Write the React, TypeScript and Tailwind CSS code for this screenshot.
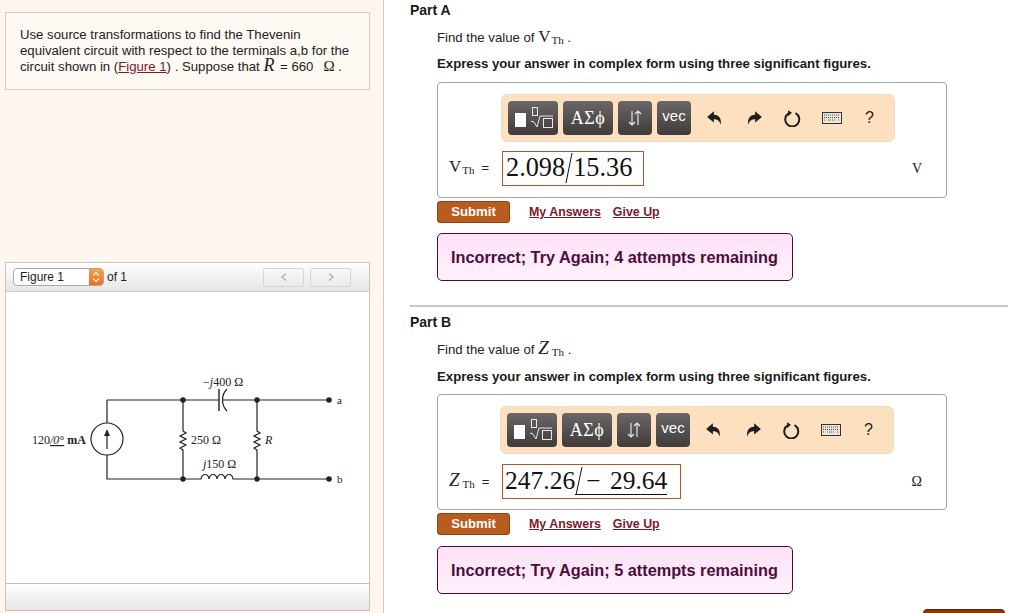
import React from "react";

const sans = "font-['Liberation_Sans',Arial,sans-serif]";
const serif = "font-['Liberation_Serif','Times_New_Roman',serif]";

function Circuit() {
  const s = "#222";
  return (
    <svg width="340" height="130" viewBox="0 0 340 130" className="block">
      <g fill="none" stroke={s} strokeWidth="1.2">
        <path d="M87 35H199M203 35H237H309" />
        <path d="M87 35V58M87 90V114H163" />
        <circle cx="87" cy="74" r="16" />
        <path d="M87 84V68" />
        <path d="M163 35V66L166 68L160 71L166 74L160 77L166 80L160 83L163 85V114" />
        <path d="M237 35V66L240 68L234 71L240 74L234 77L240 80L234 83L237 85V114" />
        <path d="M163 114H181C182 108 188 108 189 114C190 108 196 108 197 114C198 108 204 108 205 114C206 108 212 108 213 114H309" />
        <path d="M199 24V46" strokeWidth="1.4" />
        <path d="M207 24C201 30 201 40 207 46" />
      </g>
      <path d="M87 64L84 71H90Z" fill={s} />
      <g fill={s}>
        <circle cx="163" cy="35" r="2.7" /><circle cx="237" cy="35" r="2.7" />
        <circle cx="163" cy="114" r="2.7" /><circle cx="237" cy="114" r="2.7" />
        <circle cx="309" cy="35" r="2.8" /><circle cx="309" cy="114" r="2.8" />
      </g>
      <g fill="#222" fontFamily="'Liberation Serif',serif" fontSize="12">
        <text x="12" y="79">120<tspan fontStyle="italic" textDecoration="underline">/0°</tspan> <tspan fontWeight="bold">mA</tspan></text>
        <text x="171" y="79">250 Ω</text>
        <text x="245" y="79" fontStyle="italic">R</text>
        <text x="183" y="21">−<tspan fontStyle="italic">j</tspan>400 Ω</text>
        <text x="183" y="103"><tspan fontStyle="italic">j</tspan>150 Ω</text>
        <text x="317" y="39" fontSize="11">a</text>
        <text x="317" y="118" fontSize="11">b</text>
      </g>
    </svg>
  );
}

function ToolBtn({ w, children }: { w: string; children: React.ReactNode }) {
  return (
    <div className={`${w} h-[34px] rounded-[4px] bg-gradient-to-b from-[#6b6766] to-[#403c3b] flex items-center justify-center text-white shrink-0`}>
      {children}
    </div>
  );
}

function Toolbar({ ml }: { ml: string }) {
  return (
    <div className={`${ml} w-[394px] h-[48px] rounded-[6px] bg-[#fde0c0] border border-[#eddcc8] flex items-center pl-[6px]`}>
      <div className="flex gap-[5px]">
        <ToolBtn w="w-[50px]">
          <svg width="42" height="28" viewBox="0 0 42 28" fill="none">
            <rect x="3" y="9" width="11" height="14" fill="#fff" />
            <rect x="20.500" y="3.500" width="5" height="8" stroke="#e8e8e8" />
            <path d="M19 17l3 1 3 5 3-11h13" stroke="#e8e8e8" />
            <rect x="31.500" y="14.500" width="9" height="9" stroke="#e8e8e8" />
          </svg>
        </ToolBtn>
        <ToolBtn w="w-[50px]"><span className={`${serif} text-[18px] tracking-[0.5px]`}>ΑΣϕ</span></ToolBtn>
        <ToolBtn w="w-[34px]">
          <svg width="16" height="16" viewBox="0 0 16 16" fill="none" stroke="#eee" strokeWidth="1.1">
            <path d="M5 1V15M2 12l3 3 3-3" /><path d="M11 15V1M8 4l3-3 3 3" />
          </svg>
        </ToolBtn>
        <ToolBtn w="w-[34px]"><span className={`${sans} text-[15px] -mt-[4px]`}>vec</span></ToolBtn>
      </div>
      <div className="flex items-center ml-[15px] text-[#222]">
        <svg width="18" height="16" viewBox="0 0 16 14" className="mr-[21px]"><path d="M7 1L1 6l6 5V8c3 0 5 1 6 5 1-5-1-9-6-9z" fill="#1f1f1f" /></svg>
        <svg width="18" height="16" viewBox="0 0 16 14" className="mr-[20px]"><path d="M9 1l6 5-6 5V8c-3 0-5 1-6 5-1-5 1-9 6-9z" fill="#1f1f1f" /></svg>
        <svg width="18" height="18" viewBox="0 0 18 18" fill="none" className="mr-[21px]"><path d="M6 4.200a7 7 0 1 0 6.500 0" stroke="#1f1f1f" strokeWidth="2" /><path d="M5 1.200v6l4-3.500z" fill="#1f1f1f" /></svg>
        <svg width="20" height="12" viewBox="0 0 20 12" fill="none" className="mr-[23px]">
          <rect x="0.500" y="0.500" width="19" height="11" fill="#efe7da" stroke="#333" />
          <path d="M2 3h16M2 5.500h16M2 8h2M6 8h8M16 8h2" stroke="#444" strokeDasharray="1 1" />
        </svg>
        <span className={`${sans} text-[16px] leading-none`}>?</span>
      </div>
    </div>
  );
}

function Part(props: {
  title: string; sym: React.ReactNode; label: React.ReactNode; unit: string; attempts: string;
  inputW: string; answer: React.ReactNode; toolMl: string; findMt: string; msgMt: string; rowMt: string;
  exprMt: string; boxMt: string;
}) {
  return (
    <>
      <div className="text-[14px] leading-[16px] font-bold text-[#1a1a1a]">{props.title}</div>
      <div className="ml-[27px]">
        <div className={`${props.findMt} h-[18px] text-[13.200px] leading-[18px] text-[#222] flex items-baseline`}>
          Find the value of&nbsp;{props.sym}
          <span className={`${serif} text-[11px] translate-y-[2px] ml-[1px]`}>Th</span>&nbsp;.
        </div>
        <div className={`${props.exprMt} h-[16px] text-[13.200px] leading-[16px] font-bold text-[#1a1a1a] whitespace-nowrap`}>Express your answer in complex form using three significant figures.</div>
        <div className={`${props.boxMt} w-[510px] h-[116px] rounded-[4px] border border-[#a5a5a5] bg-white`}>
          <div className="pt-[11px]"><Toolbar ml={props.toolMl} /></div>
          <div className={`flex items-center ${props.rowMt} h-[36px] pl-[11px]`}>
            <div className="w-[53px] flex items-baseline text-[#222] shrink-0">
              {props.label}
              <span className={`${serif} text-[11px] translate-y-[2px] ml-[1px]`}>Th</span>
              <span className="text-[13px] ml-[7px]">=</span>
            </div>
            <div className={`${props.inputW} h-[35px] border border-[#b0562a] flex items-center pl-[2px] ${serif} text-[25.500px] text-[#111] shrink-0 whitespace-nowrap`}>
              {props.answer}
            </div>
            <div className={`${serif} flex-1 text-right pr-[24px] text-[14px] text-[#222]`}>{props.unit}</div>
          </div>
        </div>
        <div className="flex items-center mt-[3px] h-[22px]">
          <div className="w-[73px] h-[22px] rounded-[3px] bg-[#b85c20] border border-[#8a4314] flex items-center justify-center text-white text-[13.200px] font-bold">Submit</div>
          <span className="ml-[19px] text-[12.400px] font-bold underline text-[#7d1a2c]">My Answers</span>
          <span className="ml-[12px] text-[12.400px] font-bold underline text-[#7d1a2c]">Give Up</span>
        </div>
        <div className={`${props.msgMt} w-[356px] h-[48px] rounded-[5px] border border-[#4a0d3a] bg-gradient-to-b from-[#fde0f7] to-[#fff2fc] flex items-center pl-[13px] text-[16.300px] font-bold text-[#4e0d3c] whitespace-nowrap`}>
          Incorrect; Try Again; {props.attempts} attempts remaining
        </div>
      </div>
    </>
  );
}

export default function App() {
  return (
    <div className={`${sans} w-[1024px] h-[613px] overflow-hidden bg-white flex`}>
      <div className="w-[384px] h-[613px] shrink-0 bg-[#fdf6ee] border-r border-[#d3c8ba] pl-[5px] pt-[12px]">
        <div className="w-[365px] h-[78px] border border-[#d6ccbc] bg-[#fef9f3] pl-[14px] pt-[14px] text-[13.200px] leading-[16px] text-[#222] whitespace-nowrap">
          <div>Use source transformations to find the Thevenin</div>
          <div>equivalent circuit with respect to the terminals a,b for the</div>
          <div className="h-[16px] whitespace-pre">
            circuit shown in (<span className="underline text-[#7d1a2c]">Figure 1</span>) . Suppose that <span className={`${serif} italic text-[18px] leading-[12px] mr-[2px]`}>R</span> = 660 &nbsp;&thinsp;<span className={`${serif} text-[15px] leading-[12px]`}>Ω</span> .
          </div>
        </div>
        <div className="mt-[172px] w-[365px] h-[349px] border border-[#cdc2b3] flex flex-col bg-white">
          <div className="h-[29px] shrink-0 border-b border-[#d6ccbc] bg-gradient-to-b from-[#ffffff] to-[#e6e6e6] flex items-center pl-[7px]">
            <div className="w-[91px] h-[18px] rounded-[4px] border border-[#aaa] bg-white flex items-center pl-[6px] text-[12px] text-[#222] relative overflow-hidden">
              Figure 1
              <div className="absolute right-0 top-0 bottom-0 w-[14px] bg-gradient-to-b from-[#f9a040] to-[#f26a1e] flex items-center justify-center">
                <svg width="8" height="12" viewBox="0 0 8 12" fill="none" stroke="#fff" strokeWidth="1.1"><path d="M1 4.500L4 1.500L7 4.500M1 7.500L4 10.500L7 7.500" /></svg>
              </div>
            </div>
            <span className="ml-[3px] text-[12px] text-[#222]">of 1</span>
            <div className="ml-auto mr-[18px] flex gap-[6px]">
              <div className="w-[41px] h-[19px] rounded-[2px] border border-[#d5d5d5] flex items-center justify-center">
                <svg width="8" height="10" viewBox="0 0 8 10" fill="none" stroke="#b5b5b5" strokeWidth="1.600"><path d="M6 1.500L2 5l4 3.500" /></svg>
              </div>
              <div className="w-[41px] h-[19px] rounded-[2px] border border-[#d5d5d5] flex items-center justify-center">
                <svg width="8" height="10" viewBox="0 0 8 10" fill="none" stroke="#b5b5b5" strokeWidth="1.600"><path d="M2 1.500L6 5 2 8.500" /></svg>
              </div>
            </div>
          </div>
          <div className="flex-1 pt-[73px] pl-[14px]"><Circuit /></div>
          <div className="h-[27px] shrink-0 border-t border-[#c9bdae] bg-gradient-to-b from-[#ffffff] to-[#e6e6e6]" />
        </div>
      </div>
      <div className="flex-1 pl-[26px] pt-[2px] min-w-0">
        <Part title="Part A" findMt="mt-[10px]" exprMt="mt-[10px]" boxMt="mt-[10px]" msgMt="mt-[10px]" rowMt="mt-[8px]" unit="V" attempts="4" toolMl="ml-[63px]" inputW="w-[142px]"
          sym={<span className={`${serif} text-[17px] leading-none`}>V</span>}
          label={<span className={`${serif} text-[17px] leading-none`}>V</span>}
          answer={<><span className="text-[26.300px] ml-[1px]">2.098</span><svg width="8" height="32" viewBox="0 0 8 32" className="shrink-0"><path d="M7 1L1 31" stroke="#111" strokeWidth="1" /></svg><span className="text-[26.300px]">15.36</span></>} />
        <div className="mt-[24px] w-[598px] h-[2px] bg-[#c8c8c8]" />
        <div className="mt-[7px]">
          <Part title="Part B" findMt="mt-[8px]" exprMt="mt-[13px]" boxMt="mt-[9px]" msgMt="mt-[11px]" rowMt="mt-[9px]" unit="Ω" attempts="5" toolMl="ml-[62px]" inputW="w-[179px]"
            sym={<span className={`${serif} italic text-[19px] leading-none tracking-[2px]`}>Z</span>}
            label={<span className={`${serif} italic text-[19px] leading-none tracking-[2px]`}>Z</span>}
            answer={<><span>247.26</span><span className="inline-flex items-center border-b border-[#111] h-[28px] leading-[26px]"><svg width="8" height="28" viewBox="0 0 8 28" className="shrink-0"><path d="M7 0L1 28" stroke="#111" strokeWidth="1" /></svg><span className="ml-[3px] [word-spacing:3px]">− 29.64</span></span></>} />
        </div>
        <div className="mt-[15px] ml-[513px] w-[82px] h-[8px] rounded-t-[4px] bg-[#8a3a08] border border-[#5a2406]" />
      </div>
    </div>
  );
}
